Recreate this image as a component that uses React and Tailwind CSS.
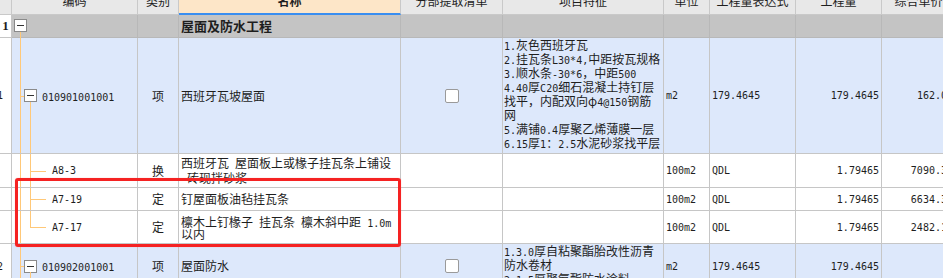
const cell = "shrink-0 border-r border-b border-[#c6c6c6] overflow-hidden";
const hcell = "shrink-0 border-r border-b border-[#c9c9c9] overflow-hidden flex justify-center";
const tree = "absolute bg-[#ffc878]";

// latin runs get a half-width mono face, CJK stays on the 12px em
const Txt = ({ s }) =>
  s.split(/([\x20-\x7e]+)/).map((p, i) =>
    p === "" ? null : /^[\x20-\x7e]+$/.test(p) ? (
      <span key={i} className="font-['DejaVu_Sans_Mono',monospace] text-[10px]">
        {p}
      </span>
    ) : (
      <span key={i}>{p}</span>
    )
  );

const Minus = () => (
  <div className="w-[13px] h-[13px] shrink-0 border border-[#8a8a8a] bg-white flex items-center justify-center">
    <div className="w-[7px] h-px bg-[#333]" />
  </div>
);

const Check = () => (
  <div className="w-[14px] h-[14px] border border-[#9a9a9a] bg-white rounded-[2px]" />
);

const Head = ({ w, bold, children, extra = "" }) => (
  <div className={`${hcell} ${w} ${extra}`}>
    <span className={`mt-[-5px] leading-[12px] whitespace-nowrap ${bold ? "font-bold" : ""}`}>
      {children}
    </span>
  </div>
);

const Num = ({ children }) => (
  <div className={`${cell} w-[12px] bg-white flex items-center`}>
    <span className="ml-[-3px] font-['DejaVu_Sans_Mono',monospace] text-[10px]">{children}</span>
  </div>
);

const Rest = ({ unit, expr, qty, price }) => (
  <>
    <div className={`${cell} w-[46px] flex items-center pl-[2px]`}>
      <Txt s={unit} />
    </div>
    <div className={`${cell} w-[86px] flex items-center pl-[2px]`}>
      <Txt s={expr} />
    </div>
    <div className={`${cell} w-[86px] flex items-center justify-end pr-[2px]`}>
      <Txt s={qty} />
    </div>
    <div className={`${cell} w-[74px] flex items-center justify-end pr-[2px]`}>
      <Txt s={price} />
    </div>
  </>
);

const SubRow = ({ h, code, kind, lines, lineH, last, unit, qty, price }) => (
  <div className={`flex ${h} bg-white`}>
    <Num />
    <div className={`${cell} w-[126px] relative flex items-center pl-[40px]`}>
      <div className={`${tree} left-[8px] w-px top-0 bottom-[-1px]`} />
      <div className={`${tree} left-[18px] w-px top-0 ${last ? "h-1/2" : "bottom-[-1px]"}`} />
      <div className={`${tree} left-[18px] w-[16px] h-px top-1/2`} />
      <Txt s={code} />
    </div>
    <div className={`${cell} w-[41px] flex items-center justify-center`}>{kind}</div>
    <div className={`${cell} w-[222px] flex flex-col justify-center pl-[2px] whitespace-pre`}>
      {lines.map((l, i) => (
        <div key={i} className={`${lineH} leading-[14px]`}>
          <Txt s={l} />
        </div>
      ))}
    </div>
    <div className={`${cell} w-[102px]`} />
    <div className={`${cell} w-[161px]`} />
    <Rest unit={unit} expr="QDL" qty={qty} price={price} />
  </div>
);

const ItemRow = ({ h, num, code, name, feats, price }) => (
  <div className={`flex ${h} bg-[#dde8fb]`}>
    <Num>{num}</Num>
    <div className={`${cell} w-[126px] relative flex items-center pl-[12px]`}>
      <div className={`${tree} left-[8px] w-px top-0 bottom-[-1px]`} />
      <div className={`${tree} left-[8px] w-[4px] h-px top-1/2`} />
      <div className={`${tree} left-[18px] w-px top-[calc(50%+6px)] bottom-[-1px]`} />
      <Minus />
      <span className="ml-[5px]">
        <Txt s={code} />
      </span>
    </div>
    <div className={`${cell} w-[41px] flex items-center justify-center`}>项</div>
    <div className={`${cell} w-[222px] flex items-center pl-[2px]`}>{name}</div>
    <div className={`${cell} w-[102px] flex items-center justify-center`}>
      <Check />
    </div>
    <div className={`${cell} w-[161px] pl-[1px] whitespace-nowrap`}>
      {feats.map((l, i) => (
        <div key={i} className="h-[14px] leading-[14px]">
          <Txt s={l} />
        </div>
      ))}
    </div>
    <Rest unit="m2" expr="179.4645" qty="179.4645" price={price} />
  </div>
);

export default function App() {
  return (
    <div className="w-[943px] h-[278px] overflow-hidden bg-white relative font-['Noto_Sans_CJK_SC',sans-serif] text-[12px] text-[#1e1e1e]">
      <div className="w-[956px] flex flex-col">
        <div className="flex h-[15px] bg-[#e8e8e8]">
          <Head w="w-[12px]" />
          <Head w="w-[126px]">编码</Head>
          <Head w="w-[41px]">类别</Head>
          <Head w="w-[222px]" bold extra="bg-[#fde6c8] border-b-2 border-b-[#3a8ef0]">
            名称
          </Head>
          <Head w="w-[102px]">分部提取清单</Head>
          <Head w="w-[161px]">项目特征</Head>
          <Head w="w-[46px]">单位</Head>
          <Head w="w-[86px]">工程量表达式</Head>
          <Head w="w-[86px]">工程量</Head>
          <Head w="w-[74px]">综合单价</Head>
        </div>

        <div className="flex h-[23px] bg-[#c4c4c4]">
          <div className={`${cell} w-[12px] bg-white flex items-center justify-center`}>
            <span className="font-['Liberation_Serif',serif] font-bold text-[13px]">1</span>
          </div>
          <div className="shrink-0 w-[126px] border-r border-b border-[#b8b8b8] relative pl-[2px] pt-[4px]">
            <div className={`${tree} left-[8px] w-px top-[17px] bottom-[-1px]`} />
            <Minus />
          </div>
          <div className="shrink-0 w-[41px] border-r border-b border-[#b8b8b8]" />
          <div className="shrink-0 w-[222px] border-r border-b border-[#b8b8b8] flex items-center pl-[2px] font-bold text-[13px]">
            屋面及防水工程
          </div>
          <div className="shrink-0 w-[102px] border-r border-b border-[#b8b8b8]" />
          <div className="shrink-0 w-[161px] border-r border-b border-[#b8b8b8]" />
          <div className="shrink-0 w-[46px] border-r border-b border-[#b8b8b8]" />
          <div className="shrink-0 w-[86px] border-r border-b border-[#b8b8b8]" />
          <div className="shrink-0 w-[86px] border-r border-b border-[#b8b8b8]" />
          <div className="shrink-0 w-[74px] border-r border-b border-[#b8b8b8]" />
        </div>

        <ItemRow
          h="h-[116px]"
          num="1"
          code="010901001001"
          name="西班牙瓦坡屋面"
          price="162.04"
          feats={[
            "1.灰色西班牙瓦",
            "2.挂瓦条L30*4,中距按瓦规格",
            "3.顺水条-30*6，中距500",
            "4.40厚C20细石混凝土持钉层",
            "找平，内配双向φ4@150钢筋",
            "网",
            "5.满铺0.4厚聚乙烯薄膜一层",
            "6.15厚1：2.5水泥砂浆找平层",
          ]}
        />

        <SubRow
          h="h-[34px]"
          code="A8-3"
          kind="换"
          lineH="h-[15px]"
          lines={["西班牙瓦 屋面板上或椽子挂瓦条上铺设", " 砖现拌砂浆"]}
          unit="100m2"
          qty="1.79465"
          price="7090.39"
        />
        <SubRow
          h="h-[23px]"
          code="A7-19"
          kind="定"
          lineH="h-[14px]"
          lines={["钉屋面板油毡挂瓦条"]}
          unit="100m2"
          qty="1.79465"
          price="6634.36"
        />
        <SubRow
          h="h-[33px]"
          code="A7-17"
          kind="定"
          last
          lineH="h-[12px]"
          lines={["檩木上钉椽子 挂瓦条 檩木斜中距 1.0m", "以内"]}
          unit="100m2"
          qty="1.79465"
          price="2482.15"
        />

        <ItemRow
          h="h-[45px]"
          num="2"
          code="010902001001"
          name="屋面防水"
          price=""
          feats={["1.3.0厚自粘聚酯胎改性沥青", "防水卷材", "2.1.5厚聚氨酯防水涂料"]}
        />
      </div>

      <div className="absolute left-[15px] top-[178px] w-[386px] h-[69px] border-[3px] border-[#f52222] rounded-[3px] shadow-[0_0_1px_#ff8a8a]" />
    </div>
  );
}
